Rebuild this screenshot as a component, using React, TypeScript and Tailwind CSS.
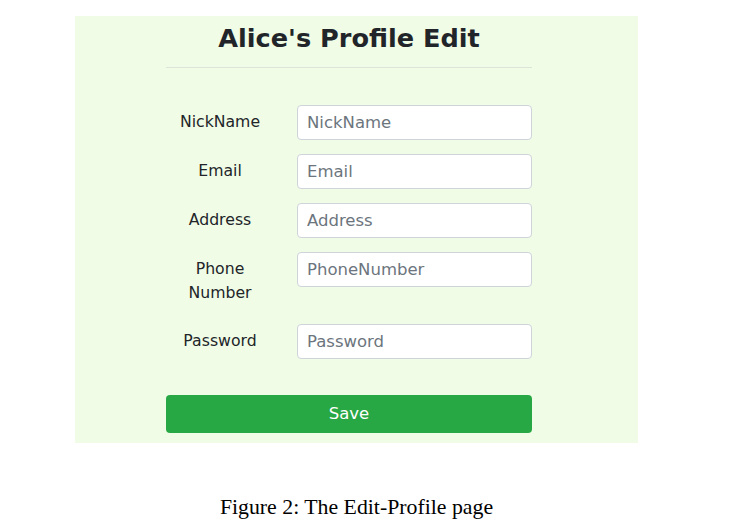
import React from "react";

const fields = [
    { label: "NickName", placeholder: "NickName", type: "text" },
    { label: "Email", placeholder: "Email", type: "email" },
    { label: "Address", placeholder: "Address", type: "text" },
    { label: "Phone Number", placeholder: "PhoneNumber", type: "text" },
    { label: "Password", placeholder: "Password", type: "password" },
];

export default function App() {
    return (
        <main className="min-h-screen bg-white pt-[16px] font-['DejaVu_Sans',sans-serif]">
            <div className="ml-[75px] w-[563px]">
                <section className="bg-[#f1fce6] pt-[7px] pb-[10px] pl-[91px]">
                    <div className="w-[366px]">
                        <h1 className="text-center text-[25.6px] leading-[30px] font-bold text-[#212529]">
                            Alice's Profile Edit
                        </h1>
                        <hr className="mt-[14px] border-0 border-t border-[#dde3d6]" />

                        <form className="mt-[37px] flex flex-col gap-[14px]" onSubmit={(e) => e.preventDefault()}>
                            {fields.map((f) => (
                                <div key={f.label} className="flex items-start gap-[23px]">
                                    <label className="w-[108px] py-[5px] text-center text-[15.7px] leading-[24px] text-[#212529]">
                                        {f.label.split(" ").map((w) => (
                                            <span key={w} className="block">{w}</span>
                                        ))}
                                    </label>
                                    <input
                                        type={f.type}
                                        placeholder={f.placeholder}
                                        className="h-[35px] w-[235px] rounded-[4px] border border-[#ced4da] bg-white px-[9px] text-[16.5px] text-[#495057] outline-none placeholder:text-[#6c757d]"
                                    />
                                </div>
                            ))}

                            <button
                                type="submit"
                                className="mt-[22px] h-[38px] w-full rounded-[4px] bg-[#28a745] text-[16.5px] text-white"
                            >
                                Save
                            </button>
                        </form>
                    </div>
                </section>

                <p className="mt-[52px] text-center font-['Liberation_Serif',serif] text-[21.8px] leading-[25px] text-black">
                    Figure 2: The Edit-Profile page
                </p>
            </div>
        </main>
    );
}
